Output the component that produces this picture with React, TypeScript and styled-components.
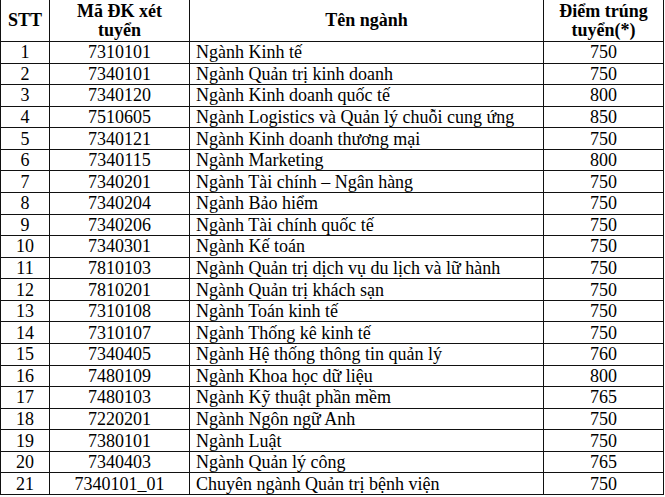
import React from 'react'
import styled, { createGlobalStyle } from 'styled-components'

const GlobalStyle = createGlobalStyle`
    html, body {
        margin: 0;
        padding: 0;
        background: #fff;
    }
    body {
        font-family: 'Liberation Serif', 'Times New Roman', serif;
        color: #000;
    }
`

const Table = styled.div`
    display: grid;
    grid-template-columns: 48px 139px 353px 119px;
    grid-template-rows: 41px repeat(21, 1fr);
    gap: 1px;
    padding: 0 1px 1px 1px;
    width: 664px;
    height: 495px;
    box-sizing: border-box;
    background: #111;
`

const Cell = styled.div<{ $align?: 'left' | 'center'; $head?: boolean }>`
    display: flex;
    flex-direction: column;
    align-items: ${(p) => (p.$align === 'left' ? 'flex-start' : 'center')};
    justify-content: center;
    padding: ${(p) => (p.$align === 'left' ? '0 6px' : '0')};
    background: #fff;
    font-size: 18px;
    line-height: ${(p) => (p.$head ? '19px' : '1')};
    font-weight: ${(p) => (p.$head ? 'bold' : 'normal')};
    text-align: center;
    white-space: nowrap;
    overflow: hidden;
`

const rows: [string, string, string, string][] = [
    ['1', '7310101', 'Ngành Kinh tế', '750'],
    ['2', '7340101', 'Ngành Quản trị kinh doanh', '750'],
    ['3', '7340120', 'Ngành Kinh doanh quốc tế', '800'],
    ['4', '7510605', 'Ngành Logistics và Quản lý chuỗi cung ứng', '850'],
    ['5', '7340121', 'Ngành Kinh doanh thương mại', '750'],
    ['6', '7340115', 'Ngành Marketing', '800'],
    ['7', '7340201', 'Ngành Tài chính – Ngân hàng', '750'],
    ['8', '7340204', 'Ngành Bảo hiểm', '750'],
    ['9', '7340206', 'Ngành Tài chính quốc tế', '750'],
    ['10', '7340301', 'Ngành Kế toán', '750'],
    ['11', '7810103', 'Ngành Quản trị dịch vụ du lịch và lữ hành', '750'],
    ['12', '7810201', 'Ngành Quản trị khách sạn', '750'],
    ['13', '7310108', 'Ngành Toán kinh tế', '750'],
    ['14', '7310107', 'Ngành Thống kê kinh tế', '750'],
    ['15', '7340405', 'Ngành Hệ thống thông tin quản lý', '760'],
    ['16', '7480109', 'Ngành Khoa học dữ liệu', '800'],
    ['17', '7480103', 'Ngành Kỹ thuật phần mềm', '765'],
    ['18', '7220201', 'Ngành Ngôn ngữ Anh', '750'],
    ['19', '7380101', 'Ngành Luật', '750'],
    ['20', '7340403', 'Ngành Quản lý công', '765'],
    ['21', '7340101_01', 'Chuyên ngành Quản trị bệnh viện', '750'],
]

export default function App() {
    return (
        <>
            <GlobalStyle />
            <Table>
                <Cell $head>STT</Cell>
                <Cell $head>
                    <span>Mã ĐK xét</span>
                    <span>tuyển</span>
                </Cell>
                <Cell $head>Tên ngành</Cell>
                <Cell $head>
                    <span>Điểm trúng</span>
                    <span>tuyển(*)</span>
                </Cell>
                {rows.map(([stt, code, name, score]) => (
                    <React.Fragment key={stt}>
                        <Cell>{stt}</Cell>
                        <Cell>{code}</Cell>
                        <Cell $align="left">{name}</Cell>
                        <Cell>{score}</Cell>
                    </React.Fragment>
                ))}
            </Table>
        </>
    )
}
